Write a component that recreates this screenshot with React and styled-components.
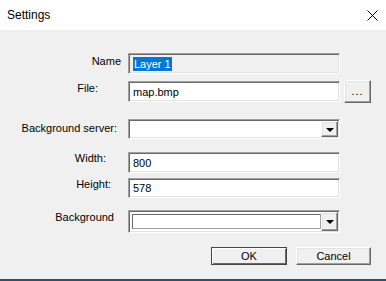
import React from 'react'
import styled, { createGlobalStyle } from 'styled-components'

const Global = createGlobalStyle`
    html, body {
        margin: 0;
        padding: 0;
        background: #f0f0f0;
    }
    * {
        box-sizing: border-box;
    }
`

const Dialog = styled.div`
    width: 386px;
    height: 281px;
    display: flex;
    flex-direction: column;
    background: #f0f0f0;
    font-family: "Liberation Sans", Arial, sans-serif;
    font-size: 11px;
    color: #000;
    border-bottom: 2px solid #2b5070;
    overflow: hidden;
`

const TitleBar = styled.div`
    height: 30px;
    flex: none;
    background: #fff;
    display: flex;
    align-items: center;
    justify-content: space-between;
    padding: 0 8px 0 7px;
    font-size: 12px;
`

const CloseButton = styled.div`
    width: 12px;
    height: 12px;
    display: flex;
    align-items: center;
    justify-content: center;
`

const Body = styled.div`
    flex: 1;
    display: flex;
    flex-direction: column;
    padding-top: 23px;
`

const Row = styled.div`
    display: grid;
    grid-template-columns: 128px 212px 1fr;
    align-items: start;
    margin-top: ${props => props.gap || 0}px;
`

const Label = styled.label`
    justify-self: end;
    white-space: nowrap;
    margin-right: ${props => props.right || 0}px;
    padding-top: ${props => props.top || 0}px;
`

const Field = styled.div`
    height: ${props => props.h || 21}px;
    background: ${props => props.readOnly ? '#f0f0f0' : '#fff'};
    border-top: 1px solid #a0a0a0;
    border-left: 1px solid #a0a0a0;
    border-right: 1px solid #fff;
    border-bottom: 1px solid #fff;
    box-shadow: inset 1px 1px 0 #696969, inset -1px -1px 0 #e3e3e3;
    display: flex;
    align-items: center;
    padding: 0 4px;
    position: relative;
`

const Selected = styled.span`
    background: #0078d7;
    color: #fff;
    padding: 1px 1px;
`

const Raised = styled.div`
    background: #f0f0f0;
    border-top: 1px solid #fff;
    border-left: 1px solid #fff;
    border-right: 1px solid #696969;
    border-bottom: 1px solid #696969;
    box-shadow: inset -1px -1px 0 #a0a0a0, inset 1px 1px 0 #e3e3e3;
    display: flex;
    align-items: center;
    justify-content: center;
`

const BrowseButton = styled(Raised)`
    width: 27px;
    height: 23px;
    margin: -1px 0 0 4px;
    padding-bottom: 2px;
    font-size: 11px;
    letter-spacing: 1px;
`

const DropButton = styled(Raised)`
    position: absolute;
    right: 1px;
    top: 1px;
    width: 17px;
    height: ${props => props.h || 16}px;
`

const Arrow = styled.span`
    width: 0;
    height: 0;
    border-left: 4px solid transparent;
    border-right: 4px solid transparent;
    border-top: 4px solid #000;
    margin-top: 1px;
`

const ComboWell = styled.div`
    position: absolute;
    left: 3px;
    top: 3px;
    width: 189px;
    height: 15px;
    background: #fff;
    border-top: 1px solid #696969;
    border-left: 1px solid #696969;
    border-right: 1px solid #a0a0a0;
    border-bottom: 1px solid #a0a0a0;
`

const Buttons = styled.div`
    display: flex;
    justify-content: flex-end;
    gap: 9px;
    padding-right: 15px;
    margin-top: 14px;
`

const DialogButton = styled(Raised)`
    width: ${props => props.w || 75}px;
    height: 18px;
    font-size: 11px;
    ${props => props.primary && `
        border: 1px solid #454545;
        box-shadow: inset 1px 1px 0 #fff, inset -1px -1px 0 #696969;
    `}
`

const Settings = () => {
    return (
        <Dialog>
            <Global />
            <TitleBar>
                <span>Settings</span>
                <CloseButton>
                    <svg width="11" height="11" viewBox="0 0 11 11">
                        <path d="M0.5 0.5 L10.5 10.5 M10.5 0.5 L0.5 10.5" stroke="#000" strokeWidth="1" />
                    </svg>
                </CloseButton>
            </TitleBar>
            <Body>
                <Row>
                    <Label right={7} top={2}>Name</Label>
                    <Field readOnly>
                        <Selected>Layer 1</Selected>
                    </Field>
                </Row>
                <Row gap={7}>
                    <Label right={30} top={1}>File:</Label>
                    <Field>map.bmp</Field>
                    <BrowseButton>...</BrowseButton>
                </Row>
                <Row gap={16}>
                    <Label right={11} top={3}>Background server:</Label>
                    <Field h={20}>
                        <DropButton h={16}><Arrow /></DropButton>
                    </Field>
                </Row>
                <Row gap={13}>
                    <Label right={22} top={0}>Width:</Label>
                    <Field>800</Field>
                </Row>
                <Row gap={5}>
                    <Label right={17} top={0}>Height:</Label>
                    <Field h={20}>578</Field>
                </Row>
                <Row gap={12}>
                    <Label right={14} top={1}>Background</Label>
                    <Field h={23}>
                        <ComboWell />
                        <DropButton h={19}><Arrow /></DropButton>
                    </Field>
                </Row>
                <Buttons>
                    <DialogButton primary w={76}>OK</DialogButton>
                    <DialogButton w={75}>Cancel</DialogButton>
                </Buttons>
            </Body>
        </Dialog>
    )
}

export default function App() {
    return <Settings />
}
